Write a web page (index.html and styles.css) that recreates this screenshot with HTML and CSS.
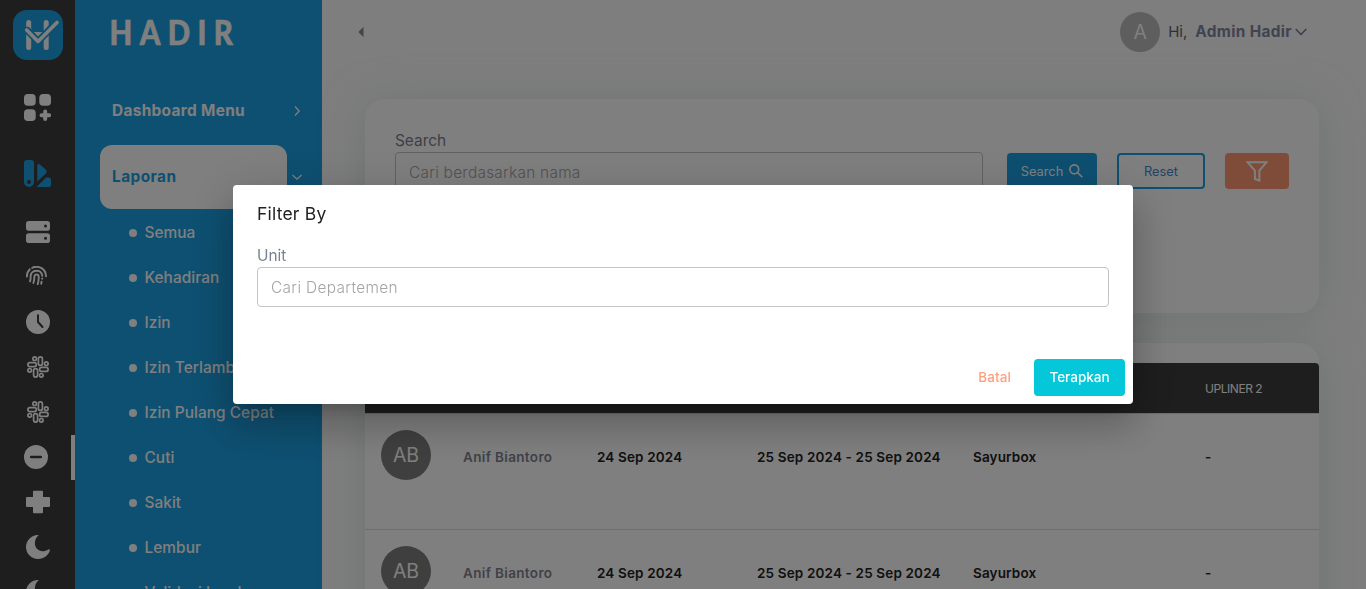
FILE: index.html
```html
<!DOCTYPE html>
<html lang="id">
<head>
<meta charset="utf-8">
<title>Hadir - Laporan</title>
<link rel="stylesheet" href="styles.css">
</head>
<body>
<div class="app">
  <nav class="rail">
    <svg class="logo" viewBox="0 0 50 50">
      <rect width="50" height="50" rx="14" fill="#1ca0e2"/>
      <g fill="none" stroke-linecap="round" stroke-linejoin="round">
        <path d="M15.7 12.5v25M33.2 12.5v25M16 24.5h17" stroke="#fff" stroke-width="5"/>
        <path d="M14.500 20.500 25 31.500 43.500 12.500" stroke="#1ca0e2" stroke-width="7"/>
        <path d="M13.700 20 25 31.500 44 12.500" stroke="#fff" stroke-width="3.600"/>
      </g>
    </svg>
    <a class="rail-top"><svg width="27" height="27" viewBox="0 0 27 27" fill="#fff"><rect width="11.700" height="11.700" rx="3.800"/><rect x="15.300" width="11.700" height="11.700" rx="3.800"/><rect y="15.300" width="11.700" height="11.700" rx="3.800"/><path d="M21.200 17.500v7.500M17.500 21.200h7.600" stroke="#fff" stroke-width="4" stroke-linecap="round"/></svg></a>
    <a class="rail-top active"><svg width="27" height="27" viewBox="0 0 27 27"><path fill="#1ca0e2" fill-rule="evenodd" d="M3 0h4a3 3 0 0 1 3 3v19a5 5 0 0 1-10 0V3a3 3 0 0 1 3-3zM5 20a2 2 0 1 0 0 4 2 2 0 0 0 0-4z"/><path fill="#1ca0e2" d="M13.300 5.500c0-1.500 1.600-1.900 2.600-.9l5.800 4.800c1.300 1.200 1.300 2.700.1 4l-8.500 8.200zM12.500 27l9.500-9.500h2.200a2.800 2.800 0 0 1 2.800 2.800v4.200a2.500 2.500 0 0 1-2.500 2.500z"/></svg></a>
    <a class="rail-item"><svg width="24" height="22" viewBox="0 0 24 22"><rect width="24" height="9.700" rx="2.800" fill="#fff"/><rect y="12.300" width="24" height="9.700" rx="2.800" fill="#fff"/><circle cx="19.500" cy="5" r="1.500" fill="#3c3c3c"/><circle cx="19.500" cy="17.200" r="1.500" fill="#3c3c3c"/></svg></a>
    <a class="rail-item finger"><svg width="21" height="19" viewBox="0 0 21 19" fill="none" stroke="#fff" stroke-width="1.900" stroke-linecap="round"><path d="M.9 10.500C1 7 2.200 4.800 3.800 3.300M6.200 1.800C12-.8 19.500 2 20 10.200M4 15.300c.8-2 .6-3 .6-4.700 0-7.500 11-8 11.700-.7M7.400 17c.9-2.500 1-4 1-6.500 0-2.800 4.200-2.700 4.300 0 .1 2.700-.2 5-1 7.700M15.200 17.700l.4-2M16.200 12.800v-.3"/></svg></a>
    <a class="rail-item"><svg width="24" height="24" viewBox="0 0 24 24"><circle cx="12" cy="12" r="12" fill="#fff"/><path d="M12 5.200V12l4.500 5" fill="none" stroke="#3c3c3c" stroke-width="2" stroke-linecap="round" stroke-linejoin="round"/></svg></a>
    <a class="rail-item"><svg width="22" height="22" viewBox="0 0 22 22"><use href="#slack"/></svg></a>
    <a class="rail-item"><svg width="22" height="22" viewBox="0 0 22 22"><use href="#slack"/></svg></a>
    <a class="rail-item current"><svg width="24" height="24" viewBox="0 0 24 24"><circle cx="12" cy="12" r="12" fill="#fff"/><path d="M7.200 12h9.600" stroke="#3c3c3c" stroke-width="2.600" stroke-linecap="round"/></svg></a>
    <a class="rail-item"><svg width="24" height="24" viewBox="0 0 24 24"><path fill="#fff" d="M8 .7h8a1 1 0 0 1 1 1v5.300h6a1 1 0 0 1 1 1v8a1 1 0 0 1-1 1h-6v5.300a1 1 0 0 1-1 1H8a1 1 0 0 1-1-1V17H1a1 1 0 0 1-1-1V8a1 1 0 0 1 1-1h6V1.700a1 1 0 0 1 1-1z"/></svg></a>
    <a class="rail-item"><svg width="24" height="24" viewBox="0 0 24 24"><use href="#moon"/></svg></a>
    <a class="rail-item"><svg width="24" height="24" viewBox="0 0 24 24"><use href="#moon"/></svg></a>
  </nav>

  <aside class="sidebar">
    <div class="brand">HADIR</div>
    <div class="group first"><span class="group-name">Dashboard Menu</span><svg width="8" height="12" viewBox="0 0 8 12"><path d="M2 1.500 6.200 6 2 10.500"/></svg></div>
    <div class="group open"><span class="group-name">Laporan</span><svg width="12" height="8" viewBox="0 0 12 8"><path d="M1.500 2 6 6.200 10.500 2"/></svg></div>
    <ul class="menu">
      <li>Semua</li><li>Kehadiran</li><li>Izin</li><li>Izin Terlambat</li><li>Izin Pulang Cepat</li><li>Cuti</li><li>Sakit</li><li>Lembur</li><li>Validasi Lembur</li>
    </ul>
  </aside>

  <main class="main">
    <header class="topbar">
      <svg width="6" height="10" viewBox="0 0 6 10"><path d="M5.500 0v10L.3 5z" fill="#85879c"/></svg>
      <div class="user"><span class="avatar small">A</span><span class="hi">Hi,</span><span class="user-name">Admin Hadir</span><svg width="12" height="8" viewBox="0 0 12 8"><path d="M.7 1 6 6.500 11.300 1" fill="none" stroke="#6e7391" stroke-width="1.300"/></svg></div>
    </header>
    <section class="card search-card">
      <div class="field">
        <label class="label">Search</label>
        <div class="input">Cari berdasarkan nama</div>
      </div>
      <div class="btn primary">Search<svg width="14" height="14" viewBox="0 0 14 14" fill="none" stroke="#fff" stroke-width="1.600"><circle cx="5.300" cy="5.300" r="4.400"/><path d="m8.500 8.500 4.800 4.800"/></svg></div>
      <div class="btn outline">Reset</div>
      <div class="btn filter"><svg width="22" height="21" viewBox="0 0 22 21"><path d="M1.500 1.200h19L13.400 9.700v9.800L8.900 18V9.700z" fill="none" stroke="#fff" stroke-width="2"/></svg></div>
    </section>
    <section class="card table-card">
      <div class="thead"><span></span><span></span><span></span><span></span><span></span><span>UPLINER 2</span></div>
      <div class="row"><span class="avatar">AB</span><span class="name">Anif Biantoro</span><span class="date">24 Sep 2024</span><span class="range">25 Sep 2024 - 25 Sep 2024</span><span class="org">Sayurbox</span><span>-</span></div>
      <div class="row"><span class="avatar">AB</span><span class="name">Anif Biantoro</span><span class="date">24 Sep 2024</span><span class="range">25 Sep 2024 - 25 Sep 2024</span><span class="org">Sayurbox</span><span>-</span></div>
    </section>
  </main>
</div>

<div class="backdrop">
  <div class="dialog">
    <h2 class="dialog-title">Filter By</h2>
    <div class="dialog-body">
      <label class="label unit">Unit</label>
      <div class="input dept">Cari Departemen</div>
    </div>
    <div class="dialog-actions"><span class="cancel">Batal</span><span class="apply">Terapkan</span></div>
  </div>
</div>

<svg class="defs">
  <symbol id="slack" viewBox="0 0 22 22"><g fill="none" stroke="#fff" stroke-width="1.700">
    <rect x="11.400" y=".9" width="4" height="8.500" rx="2"/><rect x="12.600" y="11.400" width="8.500" height="4" rx="2"/><rect x="6.600" y="12.600" width="4" height="8.500" rx="2"/><rect x=".9" y="6.600" width="8.500" height="4" rx="2"/>
    <circle cx="7.700" cy="2.700" r="1.800"/><circle cx="19.300" cy="7.700" r="1.800"/><circle cx="14.300" cy="19.300" r="1.800"/><circle cx="2.700" cy="14.300" r="1.800"/></g></symbol>
  <symbol id="moon" viewBox="0 0 24 24"><path fill="#fff" d="M12.900.1C8.300 4 7.700 9.800 10.800 13.600c3.100 3.600 7.600 3.300 11.700.9.800-.4 1.600 0 1.400.8C22.400 20.600 17.900 24 12.200 24A12 12 0 0 1 0 12C0 5.500 5.400-.1 12.100 0z"/></symbol>
</svg>
</body>
</html>
```
FILE: styles.css
```css
* { box-sizing: border-box; }
body { margin: 0; height: 589px; overflow: hidden; font-family: Inter, "Liberation Sans", sans-serif; font-size: 15.4px; background: #fcfcfc; }
svg { display: block; flex: none; }
.defs { display: none; }
.app { display: flex; height: 589px; overflow: hidden; }

.rail { width: 75px; flex: none; background: #3c3c3c; padding-top: 10px; }
.logo { width: 50px; height: 50px; margin: 0 0 14px 13px; }
.rail-top { display: flex; height: 66px; align-items: center; padding-left: 24px; }
.rail-top.active { margin-bottom: 4px; }
.rail-item { display: flex; height: 45px; align-items: center; justify-content: center; padding: 0 0 2px 1px; }
.rail-item.finger { padding: 0 3px 4px 0; }
.rail-item.current { padding: 0 0 2px; margin-top: -1px; border-right: 4px solid #fff; height: 46px; }
.rail-item.current { margin-top: 0; height: 45px; }

.sidebar { width: 247px; flex: none; background: #1ca0e2; color: #fff; }
.brand { height: 78px; padding: 14px 0 0 40px; font: 900 34px/36px Lato, sans-serif; letter-spacing: 8.500px; transform: scaleX(.865); transform-origin: left; -webkit-text-stroke: .6px #fff; }
.group { display: flex; align-items: center; height: 64px; padding-left: 25px; margin-bottom: 3px; }
.group-name { width: 187px; height: 64px; padding-left: 12px; line-height: 64px; border-radius: 12px; font-weight: 700; margin-right: 6px; white-space: nowrap; letter-spacing: .33px; }
.group path { fill: none; stroke: #fff; stroke-width: 1.300; }
.group svg { width: 8px; }
.group.first { padding-top: 2px; }
.group.open { margin-bottom: 1px; }
.group.open svg { width: 12px; margin-left: -2px; }
.open .group-name { background: #fff; color: #1ca0e2; letter-spacing: .45px; }
.menu { list-style: none; margin: 0; padding: 0 0 0 54px; }
.menu li { display: flex; align-items: center; gap: 7.500px; height: 45px; font-weight: 450; letter-spacing: .05px; white-space: nowrap; }
.menu li::before { content: ""; width: 8px; height: 8px; border-radius: 50%; background: #fff; }

.main { flex: 1; padding: 0 47px 0 43px; }
.topbar { height: 64px; display: flex; align-items: center; justify-content: space-between; padding: 0 12px 0 0; margin: 0 0 35px -7px; }
.user { display: flex; align-items: center; color: #5e6270; }
.avatar { display: flex; width: 50px; height: 50px; align-items: center; justify-content: center; border-radius: 50%; background: #7f7f7f; color: #fff; font-size: 19.500px; font-weight: 400; letter-spacing: 0; }
.avatar.small { width: 40px; height: 40px; background: #bdbdbd; }
.hi { margin: 0 8px 1px; font-size: 15px; }
.user-name { margin-bottom: 1px; font-weight: 700; color: #8487a0; margin-right: 3px; letter-spacing: .35px; }
.card { background: #fff; border-radius: 20px; box-shadow: 0 4px 40px rgba(200, 220, 212, .5); }
.search-card { height: 214px; padding: 30px 30px 0; display: flex; margin-bottom: 30px; }
.field { width: 588px; margin-right: 24px; }
.label { display: block; height: 23px; line-height: 24px; color: #7a8190; }
.input { height: 40px; line-height: 40px; padding-left: 13px; border: 1px solid #c4c4c4; border-radius: 4px; color: #a5a5a5; font-weight: 300; letter-spacing: .27px; }
.dept { letter-spacing: .35px; }
.btn { height: 36px; margin-top: 24px; border-radius: 4px; display: flex; align-items: center; justify-content: center; font-size: 13px; }
.primary { width: 90px; margin-right: 20px; background: #1ca0e2; color: #fff; gap: 6px; font-size: 12.800px; }
.outline { width: 88px; margin-right: 20px; border: 2px solid #1ca0e2; color: #4689c8; font-size: 12.800px; }
.filter { width: 64px; background: #ff9873; }
.table-card { height: 400px; padding-top: 20px; }
.thead, .row { display: grid; grid-template-columns: 82px 134px 160px 216px 232px 114px; padding-left: 16px; }
.thead { height: 50px; align-items: center; background: #3c3c3c; color: #fff; border-radius: 4px 4px 0 0; font-size: 12px; line-height: 49px; letter-spacing: -.45px; }
.row { height: 116px; border-top: 1px solid #dcdcdc; padding-top: 16px; font-size: 13.500px; font-weight: 600; line-height: 54px; letter-spacing: .15px; color: #222; white-space: nowrap; }
.row .name { color: #7e8490; letter-spacing: .35px; }

.backdrop { position: fixed; inset: 0; background: rgba(0, 0, 0, .5); display: flex; align-items: center; justify-content: center; }
.dialog { width: 900px; height: 219px; background: #fff; border-radius: 4px; box-shadow: 0 11px 15px -7px rgba(0,0,0,.2), 0 24px 38px 3px rgba(0,0,0,.14), 0 9px 46px 8px rgba(0,0,0,.12); }
.dialog-title { margin: 0; height: 59px; padding: 14px 24px; font-size: 17.500px; line-height: 30px; font-weight: 400; letter-spacing: .2px; color: #222; }
.dialog-body { padding: 0 24px; height: 115px; }
.dialog-actions { display: flex; justify-content: flex-end; align-items: center; padding-right: 8px; font-size: 13.500px; font-weight: 500; }
.cancel { color: #ff9f80; margin: 0 23px 2px 0; letter-spacing: .1px; }
.apply { width: 91px; height: 37px; line-height: 37px; text-align: center; border-radius: 4px; background: #04c8d9; color: #fff; }
```
